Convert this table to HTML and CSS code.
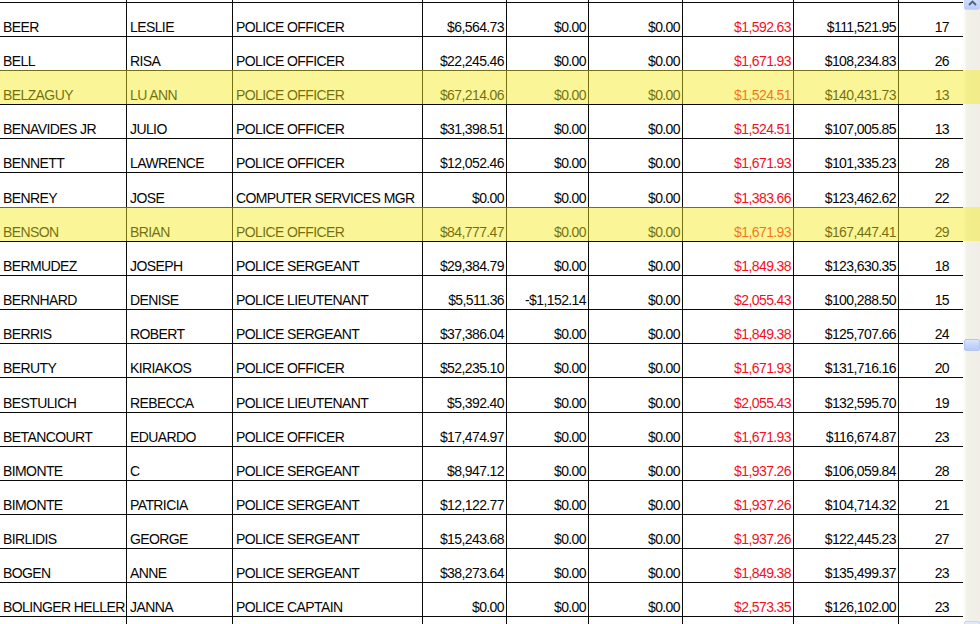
FILE: index.html
```html
<!DOCTYPE html>
<html>
<head>
<meta charset="utf-8">
<link rel="stylesheet" href="styles.css">
</head>
<body>
<div class="sheet">
  <div class="grid">
    <div class="row strip"><div class="c"></div><div class="c"></div><div class="c"></div><div class="c"></div><div class="c"></div><div class="c"></div><div class="c"></div><div class="c"></div><div class="c"></div></div>

    <div class="row"><div class="c">BEER</div><div class="c">LESLIE</div><div class="c">POLICE OFFICER</div><div class="c r">$6,564.73</div><div class="c r">$0.00</div><div class="c r">$0.00</div><div class="c r red">$1,592.63</div><div class="c r">$111,521.95</div><div class="c r n">17</div></div>
    <div class="row"><div class="c">BELL</div><div class="c">RISA</div><div class="c">POLICE OFFICER</div><div class="c r">$22,245.46</div><div class="c r">$0.00</div><div class="c r">$0.00</div><div class="c r red">$1,671.93</div><div class="c r">$108,234.83</div><div class="c r n">26</div></div>
    <div class="row hl"><div class="c">BELZAGUY</div><div class="c">LU ANN</div><div class="c">POLICE OFFICER</div><div class="c r">$67,214.06</div><div class="c r">$0.00</div><div class="c r">$0.00</div><div class="c r red">$1,524.51</div><div class="c r">$140,431.73</div><div class="c r n">13</div></div>
    <div class="row"><div class="c">BENAVIDES JR</div><div class="c">JULIO</div><div class="c">POLICE OFFICER</div><div class="c r">$31,398.51</div><div class="c r">$0.00</div><div class="c r">$0.00</div><div class="c r red">$1,524.51</div><div class="c r">$107,005.85</div><div class="c r n">13</div></div>
    <div class="row"><div class="c">BENNETT</div><div class="c">LAWRENCE</div><div class="c">POLICE OFFICER</div><div class="c r">$12,052.46</div><div class="c r">$0.00</div><div class="c r">$0.00</div><div class="c r red">$1,671.93</div><div class="c r">$101,335.23</div><div class="c r n">28</div></div>
    <div class="row tall"><div class="c">BENREY</div><div class="c">JOSE</div><div class="c">COMPUTER SERVICES MGR</div><div class="c r">$0.00</div><div class="c r">$0.00</div><div class="c r">$0.00</div><div class="c r red">$1,383.66</div><div class="c r">$123,462.62</div><div class="c r n">22</div></div>
    <div class="row hl"><div class="c">BENSON</div><div class="c">BRIAN</div><div class="c">POLICE OFFICER</div><div class="c r">$84,777.47</div><div class="c r">$0.00</div><div class="c r">$0.00</div><div class="c r red">$1,671.93</div><div class="c r">$167,447.41</div><div class="c r n">29</div></div>
    <div class="row"><div class="c">BERMUDEZ</div><div class="c">JOSEPH</div><div class="c">POLICE SERGEANT</div><div class="c r">$29,384.79</div><div class="c r">$0.00</div><div class="c r">$0.00</div><div class="c r red">$1,849.38</div><div class="c r">$123,630.35</div><div class="c r n">18</div></div>
    <div class="row"><div class="c">BERNHARD</div><div class="c">DENISE</div><div class="c">POLICE LIEUTENANT</div><div class="c r">$5,511.36</div><div class="c r">-$1,152.14</div><div class="c r">$0.00</div><div class="c r red">$2,055.43</div><div class="c r">$100,288.50</div><div class="c r n">15</div></div>
    <div class="row"><div class="c">BERRIS</div><div class="c">ROBERT</div><div class="c">POLICE SERGEANT</div><div class="c r">$37,386.04</div><div class="c r">$0.00</div><div class="c r">$0.00</div><div class="c r red">$1,849.38</div><div class="c r">$125,707.66</div><div class="c r n">24</div></div>
    <div class="row"><div class="c">BERUTY</div><div class="c">KIRIAKOS</div><div class="c">POLICE OFFICER</div><div class="c r">$52,235.10</div><div class="c r">$0.00</div><div class="c r">$0.00</div><div class="c r red">$1,671.93</div><div class="c r">$131,716.16</div><div class="c r n">20</div></div>
    <div class="row tall"><div class="c">BESTULICH</div><div class="c">REBECCA</div><div class="c">POLICE LIEUTENANT</div><div class="c r">$5,392.40</div><div class="c r">$0.00</div><div class="c r">$0.00</div><div class="c r red">$2,055.43</div><div class="c r">$132,595.70</div><div class="c r n">19</div></div>
    <div class="row"><div class="c">BETANCOURT</div><div class="c">EDUARDO</div><div class="c">POLICE OFFICER</div><div class="c r">$17,474.97</div><div class="c r">$0.00</div><div class="c r">$0.00</div><div class="c r red">$1,671.93</div><div class="c r">$116,674.87</div><div class="c r n">23</div></div>
    <div class="row"><div class="c">BIMONTE</div><div class="c">C</div><div class="c">POLICE SERGEANT</div><div class="c r">$8,947.12</div><div class="c r">$0.00</div><div class="c r">$0.00</div><div class="c r red">$1,937.26</div><div class="c r">$106,059.84</div><div class="c r n">28</div></div>
    <div class="row"><div class="c">BIMONTE</div><div class="c">PATRICIA</div><div class="c">POLICE SERGEANT</div><div class="c r">$12,122.77</div><div class="c r">$0.00</div><div class="c r">$0.00</div><div class="c r red">$1,937.26</div><div class="c r">$104,714.32</div><div class="c r n">21</div></div>
    <div class="row"><div class="c">BIRLIDIS</div><div class="c">GEORGE</div><div class="c">POLICE SERGEANT</div><div class="c r">$15,243.68</div><div class="c r">$0.00</div><div class="c r">$0.00</div><div class="c r red">$1,937.26</div><div class="c r">$122,445.23</div><div class="c r n">27</div></div>
    <div class="row"><div class="c">BOGEN</div><div class="c">ANNE</div><div class="c">POLICE SERGEANT</div><div class="c r">$38,273.64</div><div class="c r">$0.00</div><div class="c r">$0.00</div><div class="c r red">$1,849.38</div><div class="c r">$135,499.37</div><div class="c r n">23</div></div>
    <div class="row"><div class="c">BOLINGER HELLER</div><div class="c">JANNA</div><div class="c">POLICE CAPTAIN</div><div class="c r">$0.00</div><div class="c r">$0.00</div><div class="c r">$0.00</div><div class="c r red">$2,573.35</div><div class="c r">$126,102.00</div><div class="c r n">23</div></div>

    <div class="row rest"><div class="c"></div><div class="c"></div><div class="c"></div><div class="c"></div><div class="c"></div><div class="c"></div><div class="c"></div><div class="c"></div><div class="c"></div></div>
  </div>
  <div class="scrollbar">
    <div class="btn up"><svg width="9" height="6" viewBox="0 0 9 6"><path d="M1 5 L4.5 1.5 L8 5" fill="none" stroke="#4d6185" stroke-width="1.8"/></svg></div>
    <div class="gap-top"></div>
    <div class="thumb"></div>
    <div class="gap-bottom"></div>
    <div class="btn down"><svg width="9" height="6" viewBox="0 0 9 6"><path d="M1 1 L4.5 4.5 L8 1" fill="none" stroke="#4d6185" stroke-width="1.8"/></svg></div>
  </div>
</div>
</body>
</html>
```

FILE: styles.css
```css
html, body {
  margin: 0;
  padding: 0;
  background: #ffffff;
}
body {
  width: 980px;
  height: 624px;
  overflow: hidden;
  font-family: "Liberation Sans", Arial, sans-serif;
  font-size: 14px;
  letter-spacing: -0.6px;
  color: #050505;
}
.sheet {
  display: flex;
  height: 624px;
  overflow: hidden;
}
.grid {
  width: 963px;
  display: flex;
  flex-direction: column;
}
.row {
  position: relative;
  display: grid;
  grid-template-columns: 127px 106px 190px 84px 82px 94px 111px 105px 64px;
  height: 34px;
  box-sizing: border-box;
  border-bottom: 1px solid #0a0a0a;
  flex: none;
}
.row.strip {
  height: 3px;
}
.row.tall {
  height: 35px;
}
.row.rest {
  flex: 1;
  border-bottom: none;
}
.c {
  box-sizing: border-box;
  border-right: 1px solid #0a0a0a;
  display: flex;
  align-items: flex-end;
  padding: 0 2px 1px 3px;
  line-height: 16px;
  white-space: nowrap;
  overflow: visible;
}
.c:last-child {
  border-right: none;
}
.c.r {
  justify-content: flex-end;
  padding: 0 2px 1px 0;
}
.c.n {
  padding-right: 14px;
}
.c.red {
  color: #f3101c;
}
.row.hl::after {
  content: "";
  position: absolute;
  left: 0;
  right: -17px;
  top: -1px;
  bottom: 0;
  background: rgba(245, 235, 30, 0.46);
  z-index: 2;
  pointer-events: none;
}
.scrollbar {
  width: 17px;
  display: flex;
  flex-direction: column;
  background: linear-gradient(to right, #fbfbf8 0, #fbfbf8 2px, #f2f1ea 3px, #f0eee6 100%);
}
.btn {
  flex: none;
  height: 17px;
  box-sizing: border-box;
  margin-left: 1px;
  border: 1px solid #c5d4f7;
  border-radius: 2px;
  background: linear-gradient(to bottom, #e1eafd 0, #c9d8fb 60%, #b9cbf5 100%);
  display: flex;
  align-items: center;
  justify-content: center;
}
.btn.up {
  margin-top: -7px;
  align-items: flex-end;
  padding-bottom: 3px;
}
.btn.down {
  margin-bottom: -14px;
  align-items: flex-start;
  padding-top: 2px;
}
.gap-top {
  flex: none;
  height: 329px;
}
.thumb {
  flex: none;
  height: 12px;
  margin-left: 1px;
  box-sizing: border-box;
  border: 1px solid #b3c6f1;
  border-radius: 2px;
  background: linear-gradient(to bottom, #dbe5fd 0, #c6d5fa 50%, #b7caf6 100%);
}
.gap-bottom {
  flex: 1;
}
```
